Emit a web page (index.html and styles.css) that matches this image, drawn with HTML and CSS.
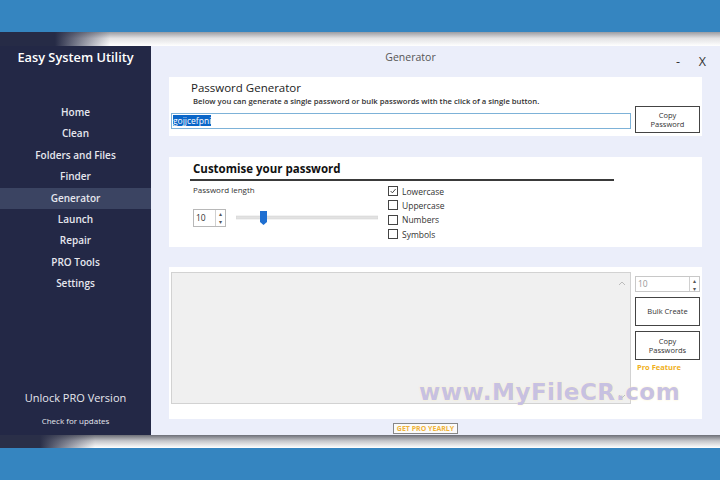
FILE: index.html
```html
<!DOCTYPE html>
<html lang="en">
<head>
    <meta charset="UTF-8">
    <title>Easy System Utility - Generator</title>
    <link rel="stylesheet" href="styles.css">
</head>
<body>

<div class="window">
    <div class="edge edge-top"></div>

    <div class="app">
        <aside class="sidebar">
            <div class="brand">Easy System Utility</div>
            <nav class="nav">
                <a href="#">Home</a>
                <a href="#">Clean</a>
                <a href="#">Folders and Files</a>
                <a href="#">Finder</a>
                <a href="#" class="active">Generator</a>
                <a href="#">Launch</a>
                <a href="#">Repair</a>
                <a href="#">PRO Tools</a>
                <a href="#">Settings</a>
            </nav>
            <div class="side-bottom">
                <div class="unlock">Unlock PRO Version</div>
                <div class="updates">Check for updates</div>
            </div>
        </aside>

        <main class="main">
            <div class="titlebar">
                <div class="title">Generator</div>
                <div class="controls"><span>-</span><span>X</span></div>
            </div>

            <section class="card pg-card">
                <div class="pg-head">
                    <h1>Password Generator</h1>
                    <p>Below you can generate a single password or bulk passwords with the click of a single button.</p>
                </div>
                <div class="pg-input"><span class="sel">gojjcefpni</span></div>
                <button class="btn pg-copy">Copy<br>Password</button>
            </section>

            <section class="card custom-card">
                <h2>Customise your password</h2>
                <div class="custom-body">
                    <div class="length">
                        <div class="label">Password length</div>
                        <div class="length-row">
                            <div class="spin">
                                <span class="spin-val">10</span>
                                <span class="spin-btns"><i>&#9652;</i><i>&#9662;</i></span>
                            </div>
                            <svg class="slider" width="142" height="18" viewBox="0 0 142 18">
                                <rect x="0" y="7" width="142" height="3" fill="#e2e2e2" stroke="#d0d0d0" stroke-width="0.5"/>
                                <path d="M24 2 H31 V13 L27.5 16 L24 13 Z" fill="#1f6fd1"/>
                            </svg>
                        </div>
                    </div>
                    <ul class="checks">
                        <li><span class="box"><svg width="10" height="10" viewBox="0 0 10 10"><path d="M2 5 L4.2 7.3 L8.3 2.5" fill="none" stroke="#333" stroke-width="1.1"/></svg></span>Lowercase</li>
                        <li><span class="box"></span>Uppercase</li>
                        <li><span class="box"></span>Numbers</li>
                        <li><span class="box"></span>Symbols</li>
                    </ul>
                </div>
            </section>

            <section class="card bulk-card">
                <div class="bulk-list">
                    <div class="scroll">
                        <svg width="8" height="5" viewBox="0 0 8 5"><path d="M1 4 L4 1 L7 4" fill="none" stroke="#bbb" stroke-width="1"/></svg>
                        <svg width="8" height="5" viewBox="0 0 8 5"><path d="M1 1 L4 4 L7 1" fill="none" stroke="#bbb" stroke-width="1"/></svg>
                    </div>
                </div>
                <div class="bulk-side">
                    <div class="spin spin-wide disabled">
                        <span class="spin-val">10</span>
                        <span class="spin-btns"><i>&#9652;</i><i>&#9662;</i></span>
                    </div>
                    <button class="btn">Bulk Create</button>
                    <button class="btn">Copy<br>Passwords</button>
                    <div class="pro">Pro Feature</div>
                </div>
                <div class="watermark">www.MyFileCR.com</div>
            </section>

            <div class="footer-row">
                <button class="get-pro">GET PRO YEARLY</button>
            </div>
        </main>
    </div>

    <div class="edge edge-bottom"></div>
</div>

</body>
</html>
```

FILE: styles.css
```css
/* base */
body {
    margin: 0;
    background-color: #3585c0;
    font-family: 'Open Sans', 'Noto Sans', sans-serif;
    color: #333;
}

.window {
    margin-top: 32px;
    height: 416px;
    display: flex;
    flex-direction: column;
}

.edge {
    height: 14px;
}

.edge-top {
    background:
        linear-gradient(to right, #262b46 0, #262b46 55px, rgba(255, 255, 255, 0) 110px),
        linear-gradient(to bottom, #9a9ca2 0, #e2e2e4 45%, #ffffff 100%);
}

.edge-bottom {
    height: 13px;
    background:
        linear-gradient(to right, #2a2f48 0, #2a2f48 40px, rgba(255, 255, 255, 0) 95px),
        linear-gradient(to bottom, #6c6e76 0, #c4c5c9 45%, #ffffff 100%);
}

.app {
    flex: 1;
    display: flex;
}

/* sidebar */
.sidebar {
    width: 151px;
    background-color: #232846;
    color: #e6e7ee;
    display: flex;
    flex-direction: column;
    text-align: center;
}

.brand {
    font-size: 12.8px;
    font-weight: 600;
    color: #fff;
    padding-top: 1px;
    line-height: 20px;
}

.nav {
    margin-top: 35px;
    display: flex;
    flex-direction: column;
}

.nav a {
    color: #e6e7ee;
    text-decoration: none;
    font-size: 10px;
    font-weight: 600;
    line-height: 21.4px;
}

.nav a.active {
    background-color: #3b4462;
}

.side-bottom {
    margin-top: auto;
    padding-bottom: 8px;
}

.unlock {
    font-size: 11px;
    line-height: 16px;
}

.updates {
    font-size: 8px;
    line-height: 12px;
    margin-top: 9px;
}

/* main */
.main {
    flex: 1;
    background-color: #ebeefa;
    padding: 0 18px;
    display: flex;
    flex-direction: column;
}

.titlebar {
    height: 31px;
    display: flex;
    margin: 0 -18px;
}

.title {
    flex: 1;
    text-align: center;
    font-size: 10.5px;
    color: #555;
    line-height: 22px;
}

.controls {
    width: 50px;
    display: flex;
    justify-content: space-between;
    padding: 7px 14px 0 6px;
    box-sizing: border-box;
    font-size: 12.5px;
    color: #333;
}

.card {
    background-color: #fff;
}

.btn {
    background-color: #fff;
    border: 1px solid #444;
    font-family: inherit;
    font-size: 7.5px;
    line-height: 9px;
    color: #333;
    padding: 0;
    width: 65px;
}

/* password generator card */
.pg-card {
    display: grid;
    grid-template-columns: 1fr 65px;
    column-gap: 4px;
    padding: 3px 2px;
}

.pg-head {
    padding-left: 20px;
}

.pg-head h1 {
    margin: 0;
    font-size: 11.5px;
    font-weight: 400;
    line-height: 16px;
    color: #222;
}

.pg-head p {
    margin: 0 0 0 2px;
    font-size: 7.7px;
    font-weight: 600;
    line-height: 10px;
    color: #333;
}

.pg-input {
    grid-row: 2;
    height: 14px;
    margin: 7px 0 4px;
    border: 1px solid #7db2d8;
    font-size: 8.5px;
    line-height: 14px;
    padding-left: 1px;
}

.sel {
    background-color: #0a66c8;
    color: #fff;
}

.pg-copy {
    grid-column: 2;
    grid-row: 1 / 3;
    align-self: end;
    height: 27px;
}

/* customise card */
.custom-card {
    margin-top: 21px;
    height: 90px;
    box-sizing: border-box;
}

.custom-card h2 {
    margin: 0 88px 0 21px;
    padding: 4px 0 2px 3px;
    font-size: 11.5px;
    line-height: 16px;
    font-weight: 700;
    color: #111;
    border-bottom: 2px solid #3a3a3a;
}

.custom-body {
    display: flex;
    padding-left: 24px;
}

.length {
    width: 195px;
}

.label {
    font-size: 8px;
    line-height: 12px;
    margin-top: 3px;
}

.length-row {
    display: flex;
    align-items: center;
    gap: 10px;
    margin-top: 13px;
}

.spin {
    width: 33px;
    height: 18px;
    box-sizing: border-box;
    border: 1px solid #b8b8b8;
    display: flex;
    font-size: 8.5px;
}

.spin-val {
    flex: 1;
    padding-left: 2px;
    line-height: 16px;
}

.spin-btns {
    width: 9px;
    border-left: 1px solid #d0d0d0;
    display: flex;
    flex-direction: column;
}

.spin-btns i {
    flex: 1;
    font-style: normal;
    font-size: 6px;
    line-height: 8px;
    text-align: center;
    color: #555;
}

.checks {
    list-style: none;
    margin: 3px 0 0;
    padding: 0;
}

.checks li {
    display: flex;
    align-items: center;
    height: 14.3px;
    font-size: 8.5px;
}

.box {
    width: 10px;
    height: 10px;
    box-sizing: border-box;
    border: 1px solid #444;
    margin-right: 4px;
    display: flex;
    align-items: center;
    justify-content: center;
}

/* bulk card */
.bulk-card {
    position: relative;
    margin-top: 20px;
    height: 152px;
    box-sizing: border-box;
    padding: 5px 2px;
    display: flex;
    gap: 4px;
}

.bulk-list {
    flex: 1;
    height: 132px;
    box-sizing: border-box;
    background-color: #f0f0f0;
    border: 1px solid #d2d2d2;
    display: flex;
    justify-content: flex-end;
}

.scroll {
    width: 16px;
    display: flex;
    flex-direction: column;
    justify-content: space-between;
    align-items: center;
    padding: 8px 0 4px;
}

.bulk-side {
    width: 65px;
    padding-top: 4px;
    display: flex;
    flex-direction: column;
    gap: 5px;
}

.spin-wide {
    width: 65px;
    height: 16px;
}

.spin-wide .spin-val {
    line-height: 14px;
}

.disabled {
    color: #999;
    border-color: #c8c8c8;
}

.bulk-side .btn {
    height: 29px;
}

.pro {
    font-size: 7.5px;
    font-weight: 700;
    color: #f0b020;
    margin-top: -3px;
    padding-left: 2px;
}

.watermark {
    position: absolute;
    left: 250px;
    top: 112px;
    font-family: 'DejaVu Sans', sans-serif;
    font-weight: 700;
    font-size: 23px;
    letter-spacing: 0.5px;
    color: rgba(185, 180, 235, 0.8);
    text-shadow: 0 0 2px rgba(255, 240, 180, 0.9);
}

.footer-row {
    flex: 1;
    display: flex;
    justify-content: center;
    align-items: flex-start;
    padding: 4px 20px 0 0;
}

.get-pro {
    background-color: #fbfbfb;
    border: 1px solid #888;
    font-family: inherit;
    font-size: 7px;
    font-weight: 700;
    line-height: 8px;
    color: #f0b43a;
    padding: 0 3px;
    height: 11px;
}
```
